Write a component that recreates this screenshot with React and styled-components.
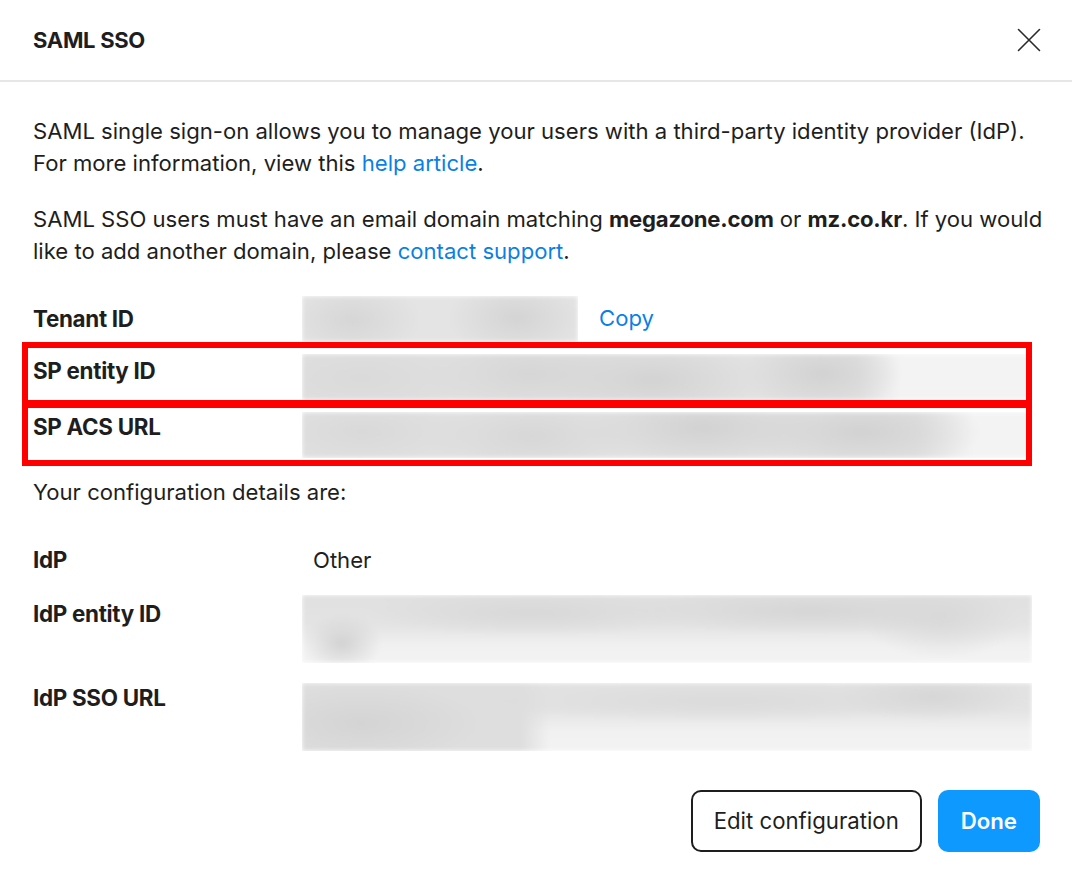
import React from "react";
import styled, { createGlobalStyle } from "styled-components";

const GlobalStyle = createGlobalStyle`
    html, body {
        margin: 0;
        padding: 0;
        background: #ffffff;
    }
    body {
        font-family: Inter, "Noto Sans", "Liberation Sans", sans-serif;
        color: #1e1e1e;
        -webkit-font-smoothing: antialiased;
    }
`;

const Modal = styled.div`
    position: relative;
    width: 1072px;
    height: 884px;
    background: #fff;
    box-sizing: border-box;
    overflow: hidden;
`;

const Header = styled.div`
    height: 80px;
    border-bottom: 2px solid #e6e6e6;
    display: flex;
    align-items: center;
    justify-content: space-between;
    padding: 0 28px 0 33px;
`;

const Title = styled.h1`
    margin: 0;
    font-size: 22px;
    font-weight: 700;
    letter-spacing: -0.3px;
`;

const CloseButton = styled.button`
    width: 30px;
    height: 30px;
    padding: 0;
    border: none;
    background: none;
    display: flex;
    align-items: center;
    justify-content: center;
    cursor: pointer;
`;

const Body = styled.div`
    padding: 34px 40px 0 33px;
    font-size: 22.1px;
    line-height: 31.5px;
`;

const Paragraph = styled.p`
    margin: 0 -20px ${(p) => p.$gap || 0}px 0;
    white-space: nowrap;
`;

const Strong = styled.b`
    font-weight: 700;
    letter-spacing: -0.2px;
`;

const Link = styled.a`
    color: #0a7fe6;
    text-decoration: none;
    cursor: pointer;
`;

const Grid = styled.div`
    display: grid;
    grid-template-columns: 269px 1fr;
    row-gap: ${(p) => p.$gap}px;
    margin-bottom: ${(p) => p.$after || 0}px;
`;

const Label = styled.div`
    font-weight: 700;
    font-size: 22.4px;
    line-height: 30px;
    letter-spacing: -0.3px;
    padding-top: ${(p) => p.$top || 0}px;
    align-self: ${(p) => (p.$center ? "center" : "start")};
`;

const ValueCell = styled.div`
    display: flex;
    align-items: center;
    gap: 21px;
`;

const Blurred = styled.div`
    height: ${(p) => p.$h}px;
    width: 100%;
    filter: blur(2px);
`;

const BlurWrap = styled.div`
    overflow: hidden;
    width: ${(p) => (p.$w ? `${p.$w}px` : "auto")};
    flex: ${(p) => (p.$w ? "none" : "1")};
`;

const PlainValue = styled.div`
    padding-left: 11px;
    line-height: 30px;
`;

const Footer = styled.div`
    display: flex;
    justify-content: flex-end;
    gap: 16px;
    padding: 39px 32px 0 0;
`;

const Button = styled.button`
    height: 62px;
    padding: 0 ${(p) => (p.$primary ? 23 : 21)}px;
    border-radius: 10px;
    font-family: inherit;
    font-size: 22.2px;
    font-weight: ${(p) => (p.$primary ? 600 : 400)};
    color: ${(p) => (p.$primary ? "#ffffff" : "#1e1e1e")};
    background: ${(p) => (p.$primary ? "#0d99ff" : "#ffffff")};
    border: ${(p) => (p.$primary ? "none" : "2px solid #1e1e1e")};
    cursor: pointer;
`;

const Highlight = styled.div`
    position: absolute;
    left: 22px;
    width: 1010px;
    top: ${(p) => p.$top}px;
    height: ${(p) => p.$h}px;
    border: 6px solid #ff0000;
    box-sizing: border-box;
    pointer-events: none;
`;

const blob = (x, y, rx, ry, c) =>
    `radial-gradient(ellipse ${rx}px ${ry}px at ${x}px ${y}px, ${c}, rgba(230,230,230,0) 100%)`;

const backgrounds = {
    tenant: [
        blob(50, 24, 70, 40, "#d6d6d6"),
        blob(215, 22, 70, 40, "#d4d4d4"),
        "linear-gradient(#e4e4e4, #e4e4e4)",
    ],
    spEntity: [
        blob(60, 24, 120, 40, "#dadada"),
        blob(230, 20, 110, 40, "#d6d6d6"),
        blob(350, 26, 110, 40, "#d3d3d3"),
        blob(520, 20, 80, 40, "#d2d2d2"),
        "linear-gradient(90deg, #e0e0e0 0%, #e2e2e2 76%, #f3f3f3 82%, #f3f3f3 100%)",
    ],
    spAcs: [
        blob(60, 20, 120, 40, "#d9d9d9"),
        blob(230, 24, 110, 40, "#d7d7d7"),
        blob(400, 16, 120, 40, "#d2d2d2"),
        blob(560, 20, 120, 40, "#d2d2d2"),
        "linear-gradient(90deg, #e2e2e2 0%, #e2e2e2 84%, #f3f3f3 92%, #f3f3f3 100%)",
    ],
    idpEntity: [
        blob(40, 48, 40, 30, "#d2d2d2"),
        blob(230, 18, 170, 24, "#d8d8d8"),
        blob(510, 16, 200, 24, "#d6d6d6"),
        blob(640, 24, 80, 40, "#dadada"),
        "linear-gradient(180deg, #e0e0e0 0%, #e4e4e4 45%, #f1f1f1 75%, #f3f3f3 100%)",
    ],
    idpSso: [
        blob(60, 40, 120, 40, "#d4d4d4"),
        blob(420, 18, 240, 22, "#dbdbdb"),
        blob(630, 14, 100, 24, "#d6d6d6"),
        "linear-gradient(90deg, #dedede 0%, #dedede 30%, rgba(0,0,0,0) 34%)",
        "linear-gradient(180deg, #e2e2e2 0%, #e4e4e4 40%, #f1f1f1 70%, #f3f3f3 100%)",
    ],
};

const Redacted = ({ kind, h, w }) => (
    <BlurWrap $w={w}>
        <Blurred $h={h} style={{ background: backgrounds[kind].join(", ") }} />
    </BlurWrap>
);

const CloseIcon = () => (
    <svg width="24" height="24" viewBox="0 0 24 24" fill="none">
        <path d="M1.5 1.5 L22.5 22.5 M22.5 1.5 L1.5 22.5" stroke="#2a2a2a" strokeWidth="1.6" strokeLinecap="round" />
    </svg>
);

const App = () => {
    return (
        <>
            <GlobalStyle />
            <Modal>
                <Header>
                    <Title>SAML SSO</Title>
                    <CloseButton aria-label="Close">
                        <CloseIcon />
                    </CloseButton>
                </Header>

                <Body>
                    <Paragraph $gap={25}>
                        SAML single sign-on allows you to manage your users with a third-party identity provider (IdP).
                        <br />
                        For more information, view this <Link>help article</Link>.
                    </Paragraph>
                    <Paragraph $gap={29}>
                        SAML SSO users must have an email domain matching <Strong>megazone.com</Strong> or{" "}
                        <Strong>mz.co.kr</Strong>. If you would
                        <br />
                        like to add another domain, please <Link>contact support</Link>.
                    </Paragraph>

                    <Grid $gap={12} $after={19}>
                        <Label $center>Tenant ID</Label>
                        <ValueCell>
                            <Redacted kind="tenant" h={46} w={276} />
                            <Link>Copy</Link>
                        </ValueCell>

                        <Label $top={2}>SP entity ID</Label>
                        <Redacted kind="spEntity" h={46} />

                        <Label>SP ACS URL</Label>
                        <Redacted kind="spAcs" h={46} />
                    </Grid>

                    <Paragraph $gap={36}>Your configuration details are:</Paragraph>

                    <Grid $gap={20}>
                        <Label>IdP</Label>
                        <PlainValue>Other</PlainValue>

                        <Label $top={4}>IdP entity ID</Label>
                        <Redacted kind="idpEntity" h={68} />

                        <Label>IdP SSO URL</Label>
                        <Redacted kind="idpSso" h={68} />
                    </Grid>
                </Body>

                <Footer>
                    <Button>Edit configuration</Button>
                    <Button $primary>Done</Button>
                </Footer>

                <Highlight $top={342} $h={64} />
                <Highlight $top={402} $h={64} />
            </Modal>
        </>
    );
};

export default App;
